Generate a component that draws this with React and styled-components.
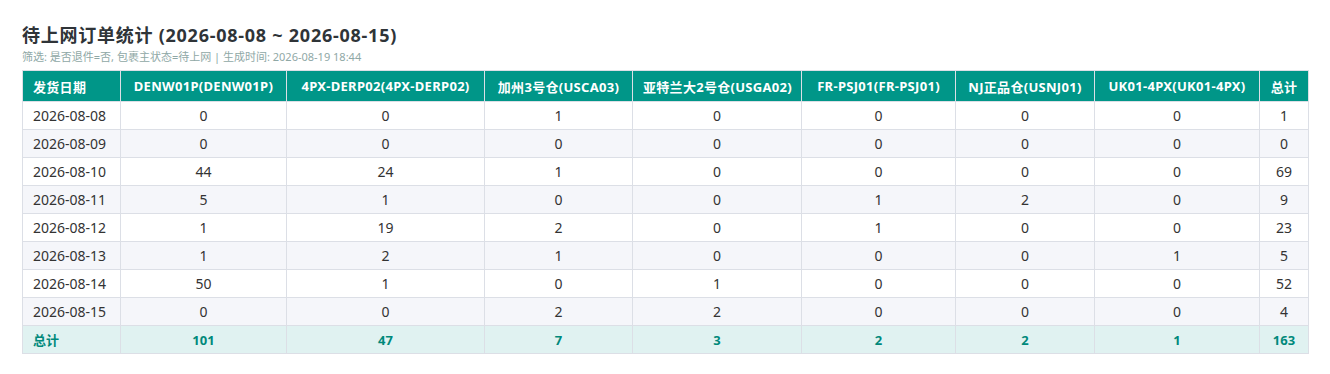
import React from "react";
import styled, { createGlobalStyle } from "styled-components";

const GlobalStyle = createGlobalStyle`
  html, body {
    margin: 0;
    padding: 0;
    background: #fff;
  }
  body {
    font-family: "Noto Sans", "Noto Sans CJK SC", sans-serif;
    color: #333;
  }
`;

const columns = [
  { key: "date", label: "发货日期", width: 98 },
  { key: "DENW01P", label: "DENW01P(DENW01P)", width: 166 },
  { key: "DERP02", label: "4PX-DERP02(4PX-DERP02)", width: 198 },
  { key: "USCA03", label: "加州3号仓(USCA03)", width: 148 },
  { key: "USGA02", label: "亚特兰大2号仓(USGA02)", width: 169 },
  { key: "PSJ01", label: "FR-PSJ01(FR-PSJ01)", width: 154 },
  { key: "USNJ01", label: "NJ正品仓(USNJ01)", width: 139 },
  { key: "UK01", label: "UK01-4PX(UK01-4PX)", width: 165 },
  { key: "total", label: "总计", width: 49 },
];

const rows = [
  ["2026-08-08", 0, 0, 1, 0, 0, 0, 0, 1],
  ["2026-08-09", 0, 0, 0, 0, 0, 0, 0, 0],
  ["2026-08-10", 44, 24, 1, 0, 0, 0, 0, 69],
  ["2026-08-11", 5, 1, 0, 0, 1, 2, 0, 9],
  ["2026-08-12", 1, 19, 2, 0, 1, 0, 0, 23],
  ["2026-08-13", 1, 2, 1, 0, 0, 0, 1, 5],
  ["2026-08-14", 50, 1, 0, 1, 0, 0, 0, 52],
  ["2026-08-15", 0, 0, 2, 2, 0, 0, 0, 4],
];

const totals = ["总计", 101, 47, 7, 3, 2, 2, 1, 163];

const Page = styled.div`
  padding: 22px 22px 20px;
`;

const Title = styled.h2`
  margin: 0;
  font-size: 18px;
  line-height: 26px;
  font-weight: 700;
  letter-spacing: 0.75px;
  color: #2f3438;
`;

const Meta = styled.div`
  margin: 1px 0 6px;
  font-size: 11px;
  line-height: 15px;
  color: #8fa8a6;
`;

const Table = styled.table`
  width: 1286px;
  border-collapse: collapse;
  table-layout: fixed;
  font-size: 14px;
`;

const Th = styled.th`
  height: 30px;
  padding: 0 10px;
  background: #009688;
  color: #fff;
  font-size: 13px;
  font-weight: 700;
  letter-spacing: 0.3px;
  border: 1px solid #dcdfe6;
  text-align: ${(p) => (p.$left ? "left" : "center")};
  white-space: nowrap;
`;

const Tr = styled.tr`
  background: ${(p) => (p.$total ? "#e0f2f1" : p.$even ? "#f5f6fa" : "#fff")};
`;

const Td = styled.td`
  height: 27px;
  padding: 0 10px;
  border: 1px solid #dcdfe6;
  text-align: ${(p) => (p.$left ? "left" : "center")};
  color: ${(p) => (p.$total ? "#00897b" : "#333")};
  font-size: ${(p) => (p.$total ? "13px" : "14px")};
  font-weight: ${(p) => (p.$total ? 700 : 400)};
`;

export default function App() {
  return (
    <>
      <GlobalStyle />
      <Page>
        <Title>待上网订单统计 (2026-08-08 ~ 2026-08-15)</Title>
        <Meta>筛选: 是否退件=否, 包裹主状态=待上网 | 生成时间: 2026-08-19 18:44</Meta>
        <Table>
          <colgroup>
            {columns.map((c) => (
              <col key={c.key} style={{ width: c.width }} />
            ))}
          </colgroup>
          <thead>
            <tr>
              {columns.map((c, i) => (
                <Th key={c.key} $left={i === 0}>
                  {c.label}
                </Th>
              ))}
            </tr>
          </thead>
          <tbody>
            {rows.map((r, ri) => (
              <Tr key={r[0]} $even={ri % 2 === 1}>
                {r.map((v, i) => (
                  <Td key={i} $left={i === 0}>
                    {v}
                  </Td>
                ))}
              </Tr>
            ))}
            <Tr $total>
              {totals.map((v, i) => (
                <Td key={i} $left={i === 0} $total>
                  {v}
                </Td>
              ))}
            </Tr>
          </tbody>
        </Table>
      </Page>
    </>
  );
}
